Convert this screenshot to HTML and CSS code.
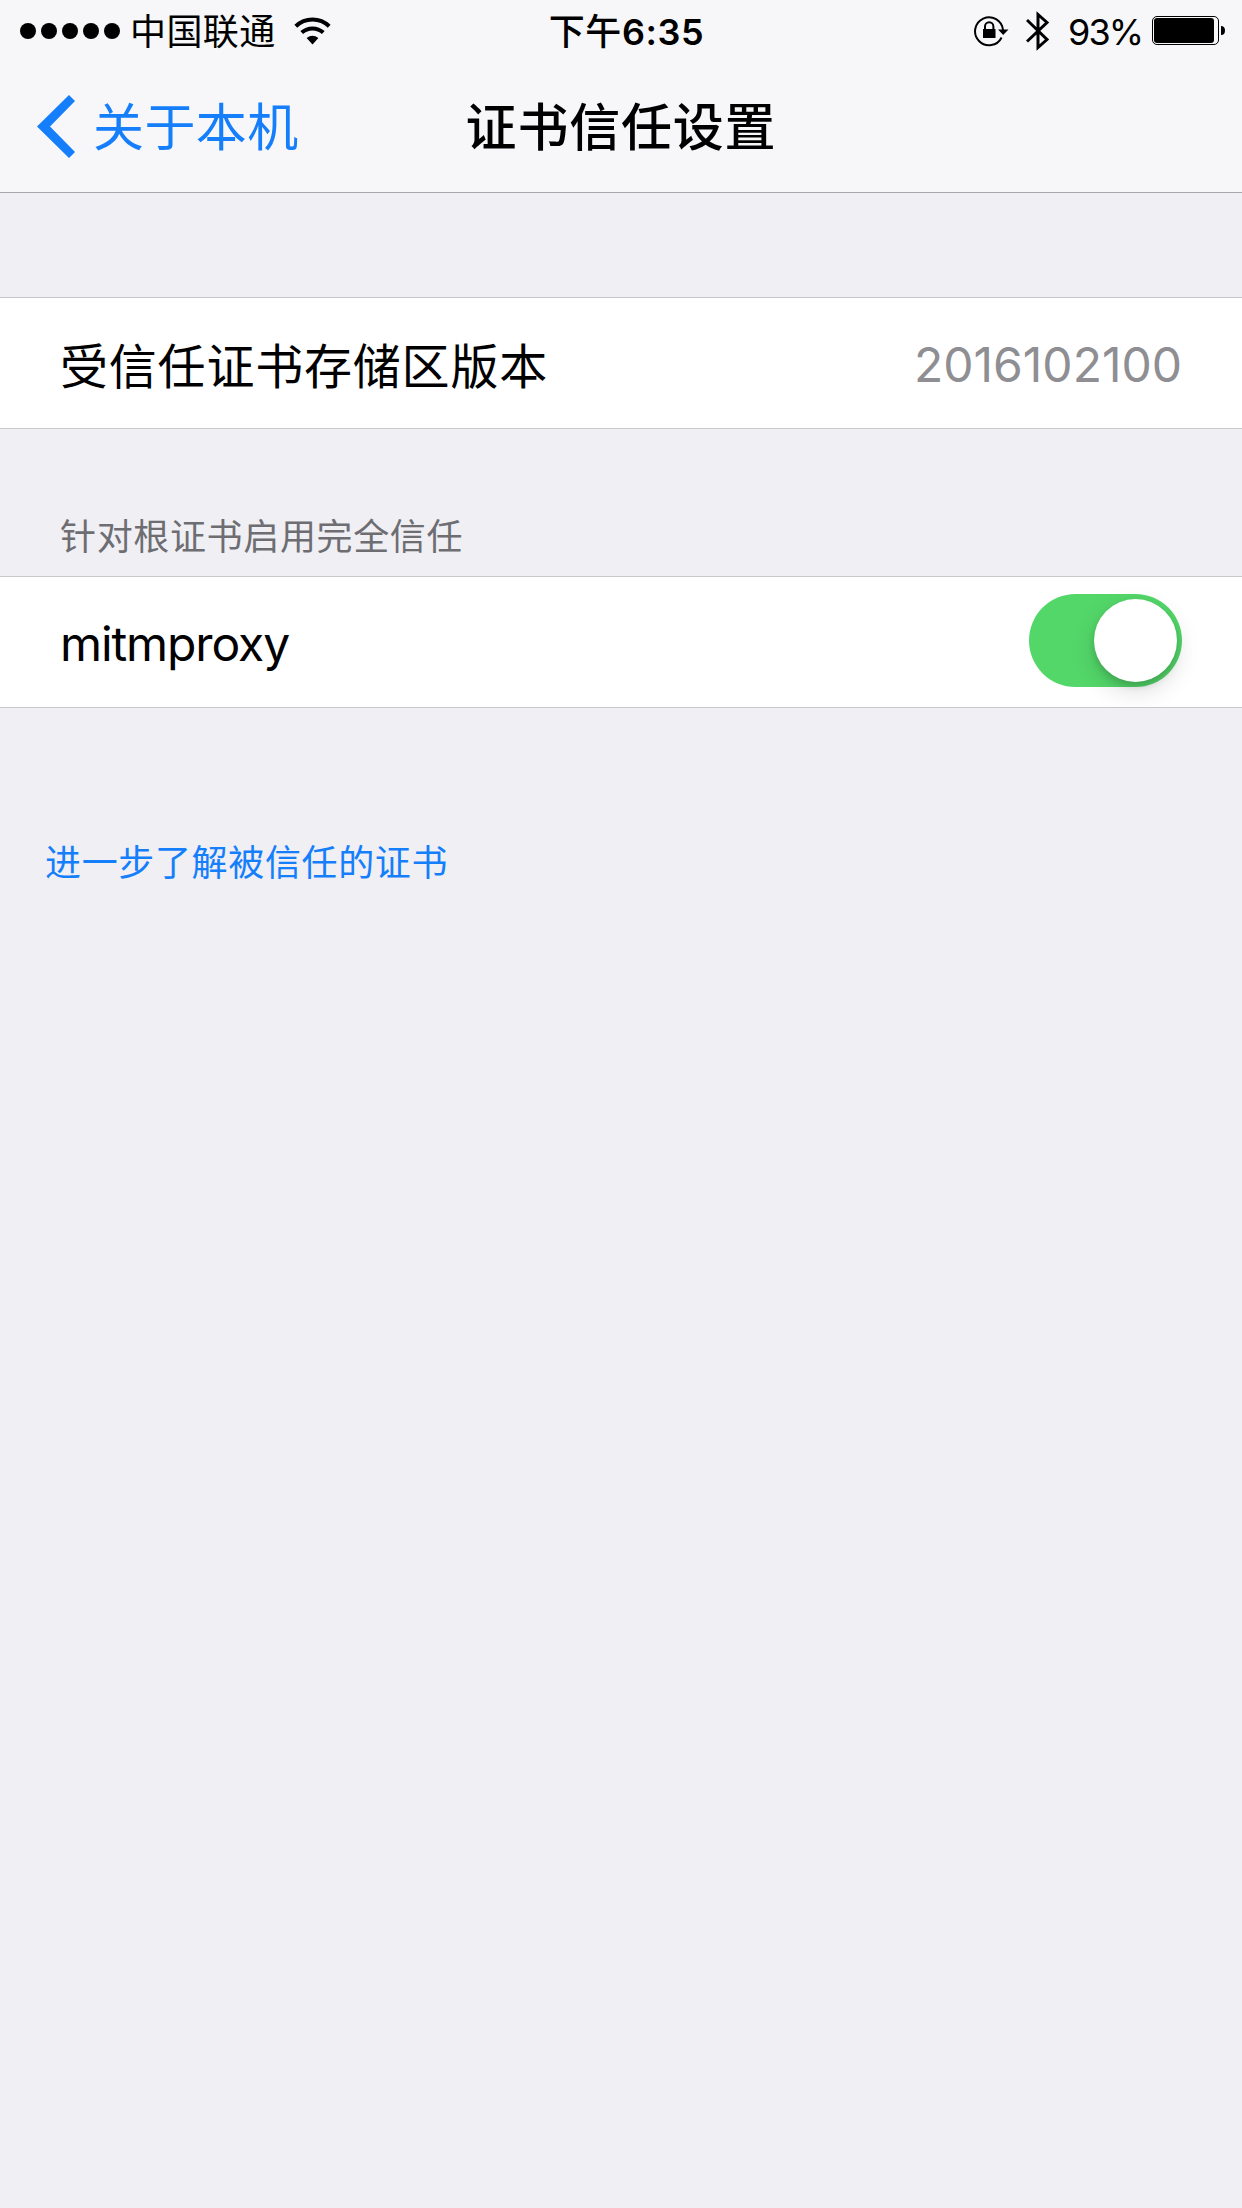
FILE: index.html
```html
<!DOCTYPE html>
<html lang="zh-CN">
<head>
<meta charset="utf-8">
<title>证书信任设置</title>
<link rel="stylesheet" href="styles.css">
</head>
<body>
<header class="top">
  <div class="status">
    <div class="status-left">
      <div class="signal"><i></i><i></i><i></i><i></i><i></i></div>
      <span class="carrier">中国联通</span>
      <svg class="wifi" width="38" height="28" viewBox="0 0 38 28" fill="none" stroke="#000">
        <path d="M1.8 9.3A24 24 0 0 1 35.2 9.3" stroke-width="4"/>
        <path d="M7.7 15.6A16 16 0 0 1 29.3 15.6" stroke-width="4"/>
        <path d="M18.5 27.5L12.6 21.1Q18.5 16.2 24.4 21.1Z" fill="#000" stroke="none"/>
      </svg>
    </div>
    <span class="time">下午<b>6:35</b></span>
    <div class="status-right">
      <svg class="lock" width="36" height="32" viewBox="0 0 36 32" fill="none" stroke="#000">
        <path d="M27.6 22.5A14 14 0 1 1 29 15" stroke-width="2"/>
        <path d="M24 14.5H34.5L29.2 20Z" fill="#000" stroke="none"/>
        <rect x="9" y="14" width="12.5" height="9" fill="#000" stroke="none"/>
        <path d="M11 14.5V11.5A4.2 4.2 0 0 1 19.4 11.5V14.5" stroke-width="2"/>
      </svg>
      <svg class="bluetooth" width="24" height="42" viewBox="0 0 24 42" fill="none" stroke="#000" stroke-width="3">
        <path d="M1 10L21 29.5L12 37.5V4.5L21 12.5L1 31.5"/>
      </svg>
      <span class="percent">93%</span>
      <svg class="battery" width="74" height="30" viewBox="0 0 74 30">
        <rect x=".5" y=".5" width="66" height="28" rx="4.5" fill="none" stroke="#000"/>
        <rect x="2" y="2" width="60" height="25" rx="3" fill="#000"/>
        <path d="M69 10Q73 10 73 14.5T69 19Z"/>
      </svg>
    </div>
  </div>
  <nav class="nav">
    <a class="back">
      <svg width="38" height="63" viewBox="0 0 38 63"><path d="M32 0L38 6L13 31.5L38 57L32 63L0 31.5Z" fill="#157efb"/></svg>
      <span>关于本机</span>
    </a>
    <h1 class="title">证书信任设置</h1>
  </nav>
</header>
<main>
  <section class="row version">
    <span class="label">受信任证书存储区版本</span>
    <span class="value">2016102100</span>
  </section>
  <h2 class="group-title">针对根证书启用完全信任</h2>
  <section class="row">
    <span class="name">mitmproxy</span>
    <div class="toggle"><div class="knob"></div></div>
  </section>
  <a class="more">进一步了解被信任的证书</a>
</main>
</body>
</html>
```
FILE: styles.css
```css
* { box-sizing: border-box; }
body {
  margin: 0;
  min-height: 2208px;
  background: #efeff4;
  color: #000;
  font-family: Inter, "Noto Sans CJK SC", sans-serif;
}
svg { display: block; flex: none; }
.top {
  height: 193px;
  background: #f7f7f9;
  border-bottom: 1px solid #a7a7ab;
}
.status {
  display: grid;
  grid-template-columns: 1fr auto 1fr;
  align-items: center;
  height: 60px;
  padding: 0 16px 0 20px;
  font-size: 36px;
  line-height: 60px;
}
.status-left, .status-right { display: flex; align-items: center; }
.status-right { justify-content: flex-end; }
.signal { display: flex; gap: 5px; }
.signal i { width: 16px; height: 16px; border-radius: 50%; background: #000; }
.carrier { margin-left: 10px; padding-top: 2px; letter-spacing: .4px; }
.wifi { margin-left: 18px; }
.time { padding: 2px 0 0 7px; font-weight: 500; letter-spacing: .6px; }
.time b { font-weight: 600; }
.lock { margin-right: 16px; }
.bluetooth { margin-right: 18px; }
.percent { margin-right: 10px; padding-top: 2px; letter-spacing: -2px; }
.nav {
  display: grid;
  grid-template-columns: 1fr auto 1fr;
  align-items: center;
  height: 132px;
  padding: 0 37px;
  line-height: 130px;
}
.back {
  display: flex;
  align-items: center;
  gap: 18px;
  color: #157efb;
  font-size: 51px;
  letter-spacing: .4px;
}
.back span, .title { padding-top: 3px; }
.title { margin: 0; font-size: 51px; font-weight: 500; letter-spacing: .8px; }
.row {
  display: flex;
  align-items: center;
  justify-content: space-between;
  height: 132px;
  padding: 0 60px;
  background: #fff;
  border: solid #c8c7cc;
  border-width: 1px 0;
  font-size: 48px;
}
.version { margin-top: 104px; }
.label { letter-spacing: .8px; }
.value { padding-top: 3px; color: #8e8e93; }
.name { padding-top: 3px; letter-spacing: -1.1px; }
.group-title {
  height: 147px;
  margin: 0;
  padding: 81px 60px 0;
  color: #6d6d72;
  font-size: 36px;
  line-height: 54px;
  font-weight: 400;
  letter-spacing: .65px;
}
.toggle {
  width: 153px;
  height: 93px;
  margin-bottom: 4px;
  padding: 5px;
  border-radius: 47px;
  background: #53d769;
}
.knob {
  width: 83px;
  height: 83px;
  margin-left: auto;
  border-radius: 50%;
  background: #fff;
  box-shadow: 0 9px 24px rgba(0, 0, 0, .14), 0 4px 7px rgba(0, 0, 0, .15);
}
.more {
  display: block;
  margin: 128px 0 0 45px;
  color: #157efb;
  font-size: 36px;
  line-height: 54px;
  letter-spacing: .65px;
}
```
